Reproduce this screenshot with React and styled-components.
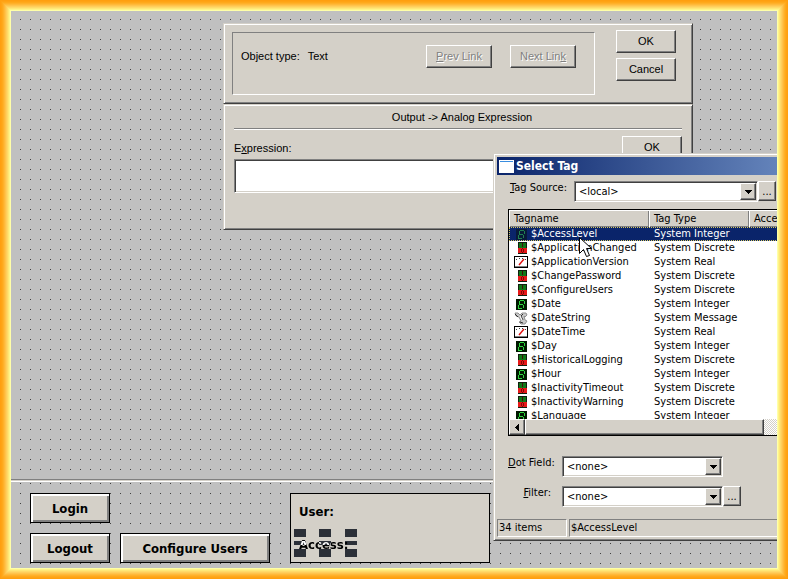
import styled, { createGlobalStyle, css } from 'styled-components';

const colors = {
  face: '#d4d0c8',
  desk: '#c0c0c0',
  shadow: '#808080',
  dark: '#404040',
  navy: '#0a246a',
};

const uiFont = "'DejaVu Sans Condensed', 'DejaVu Sans', sans-serif";
const dialogFont = "'Liberation Sans', Arial, sans-serif";

const frameRings = [
  '#ff9f10',
  '#ffa315',
  '#ffa91c',
  '#ffb02a',
  '#ffb93a',
  '#ffc34c',
  '#ffce5c',
  '#ffda69',
  '#ffe777',
  '#fff488',
  '#ffffa8',
];

const GlobalStyle = createGlobalStyle`
  * {
    box-sizing: border-box;
  }

  body {
    margin: 0;
    font-family: ${uiFont};
    font-size: 11px;
    line-height: 14px;
    color: black;
  }
`;

const raised = css`
  border: 1px solid;
  border-color: white ${colors.dark} ${colors.dark} white;
  box-shadow: inset -1px -1px ${colors.shadow};
`;

const sunken = css`
  border: 1px solid;
  border-color: ${colors.shadow} white white ${colors.shadow};
  box-shadow: inset 1px 1px ${colors.dark}, inset -1px -1px ${colors.face};
`;

const Frame = styled.div`
  min-height: 100vh;
  padding: 11px;
  display: flex;
  box-shadow: ${frameRings
    .map((color, i) => `inset 0 0 0 ${i + 1}px ${color}`)
    .join(', ')};
`;

const Desktop = styled.main`
  flex: 1;
  min-width: 0;
  position: relative;
  overflow: hidden;
  display: flex;
  flex-direction: column;
  background: ${colors.desk};
`;

// vertical lines, covered except for one pixel in every ten
const Grid = styled.div`
  background-image: linear-gradient(transparent 1px, ${colors.desk} 1px),
    linear-gradient(90deg, ${colors.dark} 1px, transparent 1px);
  background-size: 10px 10px;
`;

const UpperPane = styled(Grid)`
  flex: 1;
  background-position: 9px 8px;
`;

const LowerPane = styled(Grid)`
  padding: 13px 19px 5px;
  border-top: 1px solid ${colors.shadow};
  box-shadow: inset 0 1px ${colors.face}, inset 0 2px white;
  background-position: 9px 3px;
  display: grid;
  grid-template-columns: 80px 150px 200px;
  grid-template-rows: 30px 30px;
  gap: 10px;
`;

const ScreenButton = styled.button`
  padding: 0;
  border: 1px solid black;
  background: ${colors.face};
  box-shadow: inset 2px 2px white, inset -2px -2px ${colors.shadow};
  font: bold 13px ${uiFont};
`;

const UserPanel = styled.section`
  grid-column: 3;
  grid-row: 1 / 3;
  margin: 0 -10px 0 10px;
  padding: 9px 8px;
  border: 1px solid black;
  background: ${colors.face};
  font-weight: bold;
  font-size: 13px;
  line-height: 18px;
`;

const AccessField = styled.div`
  position: relative;
  margin-top: 15px;
`;

const Handles = styled.svg`
  position: absolute;
  left: -5px;
  top: -7px;
`;

// letters turn white where they cross the middle handles
const AccessText = styled.span`
  position: relative;
  display: inline-block;
  background: linear-gradient(white, white) 0 5px / 7px 4px no-repeat,
    linear-gradient(white, white) 20px 5px / 12px 4px no-repeat,
    black;
  background-clip: text;
  color: transparent;
`;

const Window = styled.section`
  position: absolute;
  border: 1px solid;
  border-color: ${colors.face} ${colors.dark} ${colors.dark} ${colors.face};
  box-shadow: inset 1px 1px white, inset -1px -1px ${colors.shadow};
  background: ${colors.face};
`;

const LinkDialog = styled(Window)`
  left: 212px;
  top: 12px;
  width: 470px;
  height: 81px;
  padding: 6px 16px 7px 8px;
  display: flex;
  justify-content: space-between;
  font-family: ${dialogFont};
`;

const ObjectBox = styled.div`
  width: 363px;
  margin-top: 2px;
  height: 63px;
  padding: 12px 18px 0 8px;
  display: flex;
  align-items: flex-start;
  gap: 18px;
  border: 1px solid;
  border-color: ${colors.shadow} white white ${colors.shadow};
`;

const ObjectType = styled.p`
  margin: 0 auto 0 0;
  line-height: 23px;
  display: flex;
  gap: 8px;
`;

const ButtonStack = styled.div`
  display: flex;
  flex-direction: column;
  gap: 5px;
`;

const DialogButton = styled.button`
  ${raised}
  flex: none;
  width: ${({ $width = 60 }) => $width}px;
  height: 23px;
  padding: 0 0 1px;
  background: ${colors.face};
  font: 11px ${dialogFont};
  color: black;

  &:disabled {
    color: ${colors.shadow};
    text-shadow: 1px 1px white;
  }
`;

const ExpressionDialog = styled(Window)`
  left: 212px;
  top: 93px;
  width: 470px;
  height: 126px;
  padding: 5px 10px;
  font-family: ${dialogFont};
`;

const DialogHeading = styled.h2`
  margin: 0;
  padding-left: 8px;
  height: 19px;
  border-bottom: 1px solid ${colors.shadow};
  box-shadow: 0 1px white;
  font-size: 11px;
  font-weight: normal;
  text-align: center;
`;

const ExpressionRow = styled.div`
  margin-top: 7px;
  display: flex;
  justify-content: space-between;
  align-items: center;
`;

const ExpressionInput = styled.textarea`
  ${sunken}
  display: block;
  width: 100%;
  height: 34px;
  resize: none;
  outline: none;
  font: 11px ${dialogFont};
`;

const TagWindow = styled(Window)`
  left: 482px;
  top: 142px;
  width: 470px;
  padding: 3px;
`;

const TitleBar = styled.header`
  height: 18px;
  padding-left: 2px;
  display: flex;
  align-items: center;
  gap: 2px;
  background: linear-gradient(90deg, ${colors.navy}, #6a8ac0 300px, #a6caf0);
  color: white;
`;

const Title = styled.h1`
  margin: 0;
  font-size: 12px;
  line-height: 18px;
`;

const TagBody = styled.div`
  padding: 6px 0 12px 11px;
`;

const Field = styled.div`
  display: flex;
  align-items: flex-start;
  margin-bottom: ${({ $gap }) => $gap}px;
`;

const Label = styled.label`
  width: ${({ $width }) => $width}px;
  padding-right: ${({ $pad }) => $pad}px;
  text-align: right;
  white-space: nowrap;
`;

const Combo = styled.span`
  ${sunken}
  width: ${({ $width }) => $width}px;
  height: 21px;
  padding: 1px;
  display: flex;
  background-color: white;
`;

const ComboSelect = styled.select`
  flex: 1;
  min-width: 0;
  padding: 0 3px;
  border: 0;
  outline: none;
  appearance: none;
  background: transparent;
  font: 11px ${uiFont};
  color: black;
`;

const ComboArrow = styled.span`
  ${raised}
  width: 16px;
  display: flex;
  align-items: center;
  justify-content: center;
  background: ${colors.face};
  pointer-events: none;
`;

const BrowseButton = styled.button`
  ${raised}
  width: 18px;
  height: 20px;
  padding: 0;
  background: ${colors.face};
  font: 11px ${uiFont};
`;

const ListBox = styled.div`
  margin-bottom: 20px;
  border: 1px solid black;
  background: white;
`;

const ListView = styled.div`
  height: 209px;
  overflow: hidden;
`;

const TagTable = styled.table`
  width: 100%;
  table-layout: fixed;
  border-collapse: collapse;
`;

const HeadCell = styled.th`
  width: ${({ $width }) => ($width ? `${$width}px` : 'auto')};
  height: 17px;
  padding: 2px 5px 1px;
  background: ${colors.face};
  box-shadow: inset 1px 1px white, inset -1px -1px ${colors.shadow};
  font-weight: normal;
  text-align: left;
`;

const Row = styled.tr`
  ${({ $selected }) =>
    $selected &&
    css`
      background: ${colors.navy};
      color: white;
      outline: 1px dotted #d8c860;
      outline-offset: -1px;
    `}
`;

const Cell = styled.td`
  height: 14px;
  padding: 0 5px;
  white-space: nowrap;
`;

const TagName = styled.span`
  display: flex;
  align-items: center;
  gap: 3px;
`;

const ScrollBar = styled.div`
  height: 16px;
  display: flex;
  background: repeating-conic-gradient(white 0 25%, ${colors.face} 0 50%) 0 0 /
    2px 2px;
`;

const ScrollButton = styled.button`
  ${raised}
  width: 16px;
  padding: 0;
  display: flex;
  align-items: center;
  justify-content: center;
  background: ${colors.face};
`;

const ScrollThumb = styled.div`
  ${raised}
  width: 239px;
  background: ${colors.face};
`;

const StatusBar = styled.footer`
  display: flex;
  gap: 2px;
`;

const StatusCell = styled.span`
  width: ${({ $width }) => ($width ? `${$width}px` : 'auto')};
  flex: ${({ $width }) => ($width ? 'none' : 1)};
  height: 18px;
  padding: 1px;
  border: 1px solid;
  border-color: ${colors.shadow} white white ${colors.shadow};
`;

const Pointer = styled.svg`
  position: absolute;
  left: 568px;
  top: 226px;
`;

function IntegerIcon({ selected }) {
  return (
    <svg width="14" height="14" shapeRendering="crispEdges">
      <rect
        x="2"
        y="2"
        width="11"
        height="11"
        fill={selected ? '#081a38' : '#001800'}
      />
      <path
        d="M6 3.5h4M5 7.5h4M4 11.5h4M5.5 4v3M10.5 4v3M4.5 8v3M9.5 8v3"
        stroke={selected ? '#208050' : '#30d840'}
      />
    </svg>
  );
}

function DiscreteIcon() {
  return (
    <svg width="14" height="14" shapeRendering="crispEdges">
      <rect x="4" y="1" width="9" height="12" fill="#102010" />
      <rect x="5" y="2" width="7" height="5" fill="#107818" />
      <rect x="4" y="7" width="9" height="5" fill="#e81818" />
      <path d="M8.5 2v4" stroke="#401008" />
      <path d="M7.5 8v3M9.5 8v3M8 7.5h1M8 11.5h1" stroke="#800808" />
    </svg>
  );
}

function RealIcon() {
  return (
    <svg width="14" height="14">
      <rect x="0.5" y="1.5" width="13" height="11" fill="white" stroke="black" />
      <path
        d="M2 5l1-1M5 3.500h1M8 3.500h1M11 4l1 1"
        fill="none"
        stroke="#404040"
      />
      <path d="M5 10l5-6" stroke="#e01010" strokeWidth="1.4" />
      <path d="M1 11.5h12" stroke="#808080" />
    </svg>
  );
}

function MessageIcon() {
  return (
    <svg width="14" height="14">
      <path
        d="M1 2h3l2 2 2-2h4l1 2-2 2-1-1 1 4 2 1-2 3H7l-2-2 2-1-2-4-3-1z"
        fill="#c8c8c8"
        stroke="#909090"
      />
      <path d="M1 3l3 3M6 11l3 1M9 3l-2 2 2 4" fill="none" stroke="#303030" />
      <path d="M6 5l2 4" stroke="white" />
    </svg>
  );
}

const icons = {
  Integer: IntegerIcon,
  Discrete: DiscreteIcon,
  Real: RealIcon,
  Message: MessageIcon,
};

const tags = [
  { name: '$AccessLevel', type: 'Integer' },
  { name: '$ApplicationChanged', type: 'Discrete' },
  { name: '$ApplicationVersion', type: 'Real' },
  { name: '$ChangePassword', type: 'Discrete' },
  { name: '$ConfigureUsers', type: 'Discrete' },
  { name: '$Date', type: 'Integer' },
  { name: '$DateString', type: 'Message' },
  { name: '$DateTime', type: 'Real' },
  { name: '$Day', type: 'Integer' },
  { name: '$HistoricalLogging', type: 'Discrete' },
  { name: '$Hour', type: 'Integer' },
  { name: '$InactivityTimeout', type: 'Discrete' },
  { name: '$InactivityWarning', type: 'Discrete' },
  { name: '$Language', type: 'Integer' },
];

function ComboBox({ id, value, width }) {
  return (
    <Combo $width={width}>
      <ComboSelect id={id} defaultValue={value}>
        <option>{value}</option>
      </ComboSelect>
      <ComboArrow>
        <svg width="7" height="4" shapeRendering="crispEdges">
          <path d="M0 0h7L3.500 4z" />
        </svg>
      </ComboArrow>
    </Combo>
  );
}

function TagList() {
  return (
    <ListBox>
      <ListView>
        <TagTable>
          <thead>
            <tr>
              <HeadCell $width={140}>Tagname</HeadCell>
              <HeadCell $width={100}>Tag Type</HeadCell>
              <HeadCell>Access Name</HeadCell>
            </tr>
          </thead>
          <tbody>
            {tags.map(({ name, type }, index) => {
              const Icon = icons[type];
              return (
                <Row key={name} $selected={index === 0}>
                  <Cell>
                    <TagName>
                      <Icon selected={index === 0} />
                      {name}
                    </TagName>
                  </Cell>
                  <Cell>System {type}</Cell>
                  <Cell />
                </Row>
              );
            })}
          </tbody>
        </TagTable>
      </ListView>
      <ScrollBar>
        <ScrollButton aria-label="Scroll left">
          <svg width="4" height="7" shapeRendering="crispEdges">
            <path d="M4 0v7L0 3.500z" />
          </svg>
        </ScrollButton>
        <ScrollThumb />
      </ScrollBar>
    </ListBox>
  );
}

function SelectTag() {
  return (
    <TagWindow>
      <TitleBar>
        <svg width="15" height="13" shapeRendering="crispEdges">
          <rect width="15" height="13" fill="white" />
          <rect x="1" y="1" width="13" height="1" fill="#3a8ee0" />
        </svg>
        <Title>Select Tag</Title>
      </TitleBar>
      <TagBody>
        <Field $gap={7}>
          <Label htmlFor="source" $width={66} $pad={7}>
            <u>T</u>ag Source:
          </Label>
          <ComboBox id="source" value="<local>" width={184} />
          <BrowseButton>...</BrowseButton>
        </Field>
        <TagList />
        <Field $gap={9}>
          <Label htmlFor="dot-field" $width={54} $pad={9}>
            <u>D</u>ot Field:
          </Label>
          <ComboBox id="dot-field" value="<none>" width={161} />
        </Field>
        <Field $gap={0}>
          <Label htmlFor="filter" $width={54} $pad={11}>
            <u>F</u>ilter:
          </Label>
          <ComboBox id="filter" value="<none>" width={161} />
          <BrowseButton>...</BrowseButton>
        </Field>
      </TagBody>
      <StatusBar>
        <StatusCell $width={70}>34 items</StatusCell>
        <StatusCell>$AccessLevel</StatusCell>
      </StatusBar>
    </TagWindow>
  );
}

function App() {
  return (
    <Frame>
      <GlobalStyle />
      <Desktop>
        <UpperPane />
        <LowerPane>
          <ScreenButton>Login</ScreenButton>
          <span />
          <UserPanel>
            User:
            <AccessField>
              <Handles width="64" height="28" fill="#2c3038">
                {[0, 25, 51].map((x) => (
                  <g key={x}>
                    <rect x={x} y="0" width="12" height="8" />
                    <rect x={x} y="12" width="12" height="4" />
                    <rect x={x} y="20" width="12" height="8" />
                  </g>
                ))}
              </Handles>
              <AccessText>Access:</AccessText>
            </AccessField>
          </UserPanel>
          <ScreenButton>Logout</ScreenButton>
          <ScreenButton>Configure Users</ScreenButton>
        </LowerPane>

        <LinkDialog>
          <ObjectBox>
            <ObjectType>
              <span>Object type:</span>
              <span>Text</span>
            </ObjectType>
            <DialogButton $width={66} disabled>
              <u>P</u>rev Link
            </DialogButton>
            <DialogButton $width={66} disabled>
              Next Lin<u>k</u>
            </DialogButton>
          </ObjectBox>
          <ButtonStack>
            <DialogButton>OK</DialogButton>
            <DialogButton>Cancel</DialogButton>
          </ButtonStack>
        </LinkDialog>

        <ExpressionDialog>
          <DialogHeading>Output -&gt; Analog Expression</DialogHeading>
          <ExpressionRow>
            <label htmlFor="expression">
              E<u>x</u>pression:
            </label>
            <DialogButton>OK</DialogButton>
          </ExpressionRow>
          <ExpressionInput id="expression" />
        </ExpressionDialog>

        <SelectTag />

        <Pointer width="13" height="22">
          <path
            d="M0.500 0.500v16l4-4 3 7 3-1-3-7h5z"
            fill="white"
            stroke="black"
          />
        </Pointer>
      </Desktop>
    </Frame>
  );
}

export default App;
